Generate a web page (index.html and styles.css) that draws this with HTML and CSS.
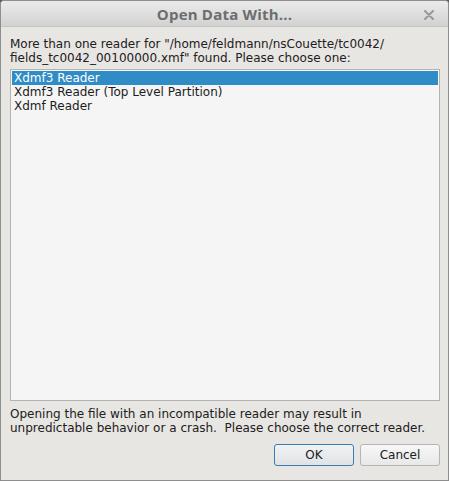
FILE: index.html
```html
<!DOCTYPE html>
<html>
<head>
<meta charset="utf-8">
<link rel="stylesheet" href="styles.css">
</head>
<body>
<div class="window">
  <div class="titlebar">
    <span class="title">Open Data With...</span>
    <svg class="close" width="10" height="10" viewBox="0 0 10 10"><path d="M1 1L9 9M9 1L1 9" stroke="#9c9c9c" stroke-width="2.2" stroke-linecap="round"/></svg>
  </div>
  <div class="content">
    <p class="msg">More than one reader for "/home/feldmann/nsCouette/tc0042/<br>fields_tc0042_00100000.xmf" found. Please choose one:</p>
    <ul class="list">
      <li class="item selected">Xdmf3 Reader</li>
      <li class="item">Xdmf3 Reader (Top Level Partition)</li>
      <li class="item">Xdmf Reader</li>
    </ul>
    <p class="msg note">Opening the file with an incompatible reader may result in<br>unpredictable behavior or a crash.&nbsp; Please choose the correct reader.</p>
    <div class="buttons">
      <button class="btn default">OK</button>
      <button class="btn">Cancel</button>
    </div>
  </div>
</div>
</body>
</html>
```
FILE: styles.css
```css
html, body {
  margin: 0;
  padding: 0;
  height: 100%;
  background: #5a5a5a;
}
body {
  font-family: "DejaVu Sans", sans-serif;
  font-size: 12px;
  color: #202020;
}
.window {
  box-sizing: border-box;
  height: 481px;
  width: 449px;
  border: 1px solid #8e8e8e;
  border-radius: 4px 4px 0 0;
  background: #e8e6e3;
  display: flex;
  flex-direction: column;
  overflow: hidden;
}
.titlebar {
  position: relative;
  height: 25px;
  flex: none;
  background: linear-gradient(#ebebeb, #d2d2d2);
  border-bottom: 1px solid #c4c4c4;
  display: flex;
  align-items: center;
  justify-content: center;
}
.title {
  font-family: "Open Sans", "Noto Sans", sans-serif;
  font-weight: bold;
  font-size: 15px;
  color: #6d6d6d;
  letter-spacing: 0.2px;
}
.close {
  position: absolute;
  right: 14px;
  top: 9px;
}
.content {
  flex: 1;
  display: flex;
  flex-direction: column;
  padding: 10px 8px 0 9px;
}
.msg {
  margin: 0;
  line-height: 14px;
}
.list {
  list-style: none;
  margin: 4px 0 0 0;
  padding: 1px 1px;
  height: 328px;
  border: 1px solid #b3b3b3;
  background: #f5f5f5;
}
.item {
  height: 14px;
  line-height: 14px;
  padding-left: 2px;
  color: #1c1c1c;
}
.item.selected {
  background: #308cc6;
  color: #ffffff;
}
.note {
  margin-top: 6px;
}
.buttons {
  display: flex;
  justify-content: flex-end;
  gap: 6px;
  margin-top: 9px;
}
.btn {
  width: 80px;
  height: 22px;
  font-family: "DejaVu Sans", sans-serif;
  font-size: 12px;
  color: #202020;
  border: 1px solid #b5b5b5;
  border-radius: 3px;
  background: linear-gradient(#f7f7f7, #e8e8e8);
  padding: 0;
}
.btn.default {
  border-color: #3b7cb4;
  background: linear-gradient(#f1f2f3, #e0e3e6);
}
```
